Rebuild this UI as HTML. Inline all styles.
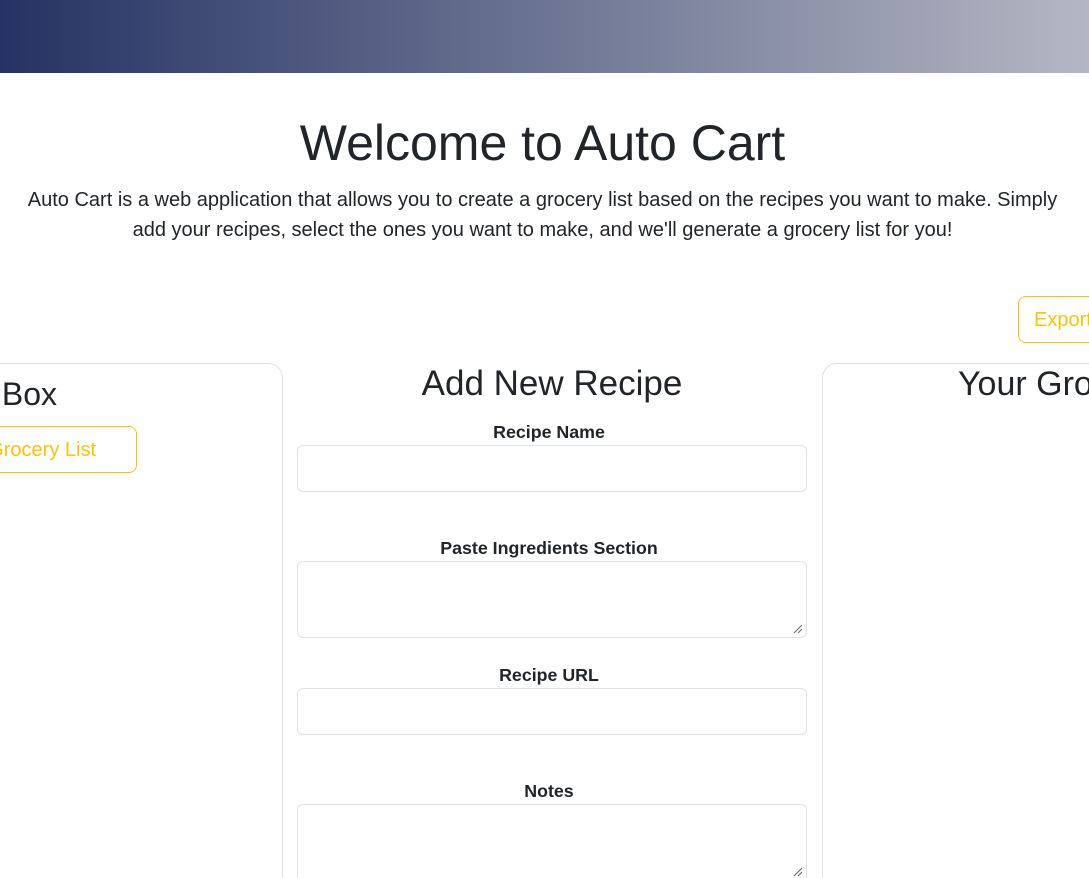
<!DOCTYPE html>
<html><head><style>
html,body{margin:0;width:1089px;height:878px;overflow:hidden;background:#fff;font-family:"Liberation Sans",Arial,sans-serif;color:#212529;position:relative}
.hdr{position:absolute;left:0;top:0;width:1089px;height:73px;background:linear-gradient(90deg,#253263,#b4b7c3)}
.a{position:absolute;white-space:nowrap}
.card{position:absolute;border:1px solid #dee2e6;border-radius:15px;background:#fff}
.btn{position:absolute;border:1px solid #ffc107;border-radius:8px;color:#ffc107;font-size:20px;box-sizing:border-box;white-space:nowrap}
.inp{position:absolute;left:297px;width:510px;border:1px solid #dee2e6;border-radius:6px;box-sizing:border-box}
.lbl{position:absolute;left:294px;width:510px;text-align:center;font-weight:bold;font-size:17.8px}
</style></head><body>
<div class="hdr"></div>
<div class="a" style="left:0;width:1085px;top:114px;text-align:center;font-size:50px">Welcome to Auto Cart</div>
<div class="a" style="left:0;width:1085px;top:185px;text-align:center;font-size:20px;line-height:30px">Auto Cart is a web application that allows you to create a grocery list based on the recipes you want to make. Simply<br>add your recipes, select the ones you want to make, and we'll generate a grocery list for you!</div>
<div class="btn" style="left:1018px;top:296px;width:200px;height:47px;padding:13px 0 0 15px;line-height:20px">Export List</div>
<div class="card" style="left:-40px;top:363px;width:321px;height:600px"></div>
<div class="a" style="right:1032px;top:376px;font-size:32px">Recipe Box</div>
<div class="btn" style="left:-120px;top:426px;width:257px;height:47px;line-height:47px;text-align:right;padding-right:40px">Generate Grocery List</div>
<div class="a" style="left:297px;width:510px;top:364px;text-align:center;font-size:35px">Add New Recipe</div>
<div class="lbl" style="top:422px">Recipe Name</div>
<div class="inp" style="top:445px;height:47px"></div>
<div class="lbl" style="top:538px">Paste Ingredients Section</div>
<div class="inp" style="top:561px;height:77px"></div>
<div class="lbl" style="top:665px">Recipe URL</div>
<div class="inp" style="top:688px;height:47px"></div>
<div class="lbl" style="top:781px">Notes</div>
<div class="inp" style="top:804px;height:90px"></div>
<svg class="a" style="left:793px;top:624px" width="10" height="10"><path d="M1 9L9 1M5 9L9 5" stroke="#666" stroke-width="1"/></svg>
<svg class="a" style="left:793px;top:867px" width="10" height="10"><path d="M1 9L9 1M5 9L9 5" stroke="#666" stroke-width="1"/></svg>
<div class="card" style="left:822px;top:363px;width:400px;height:600px"></div>
<div class="a" style="left:958px;top:365px;font-size:34px">Your Grocery List</div>
</body></html>
